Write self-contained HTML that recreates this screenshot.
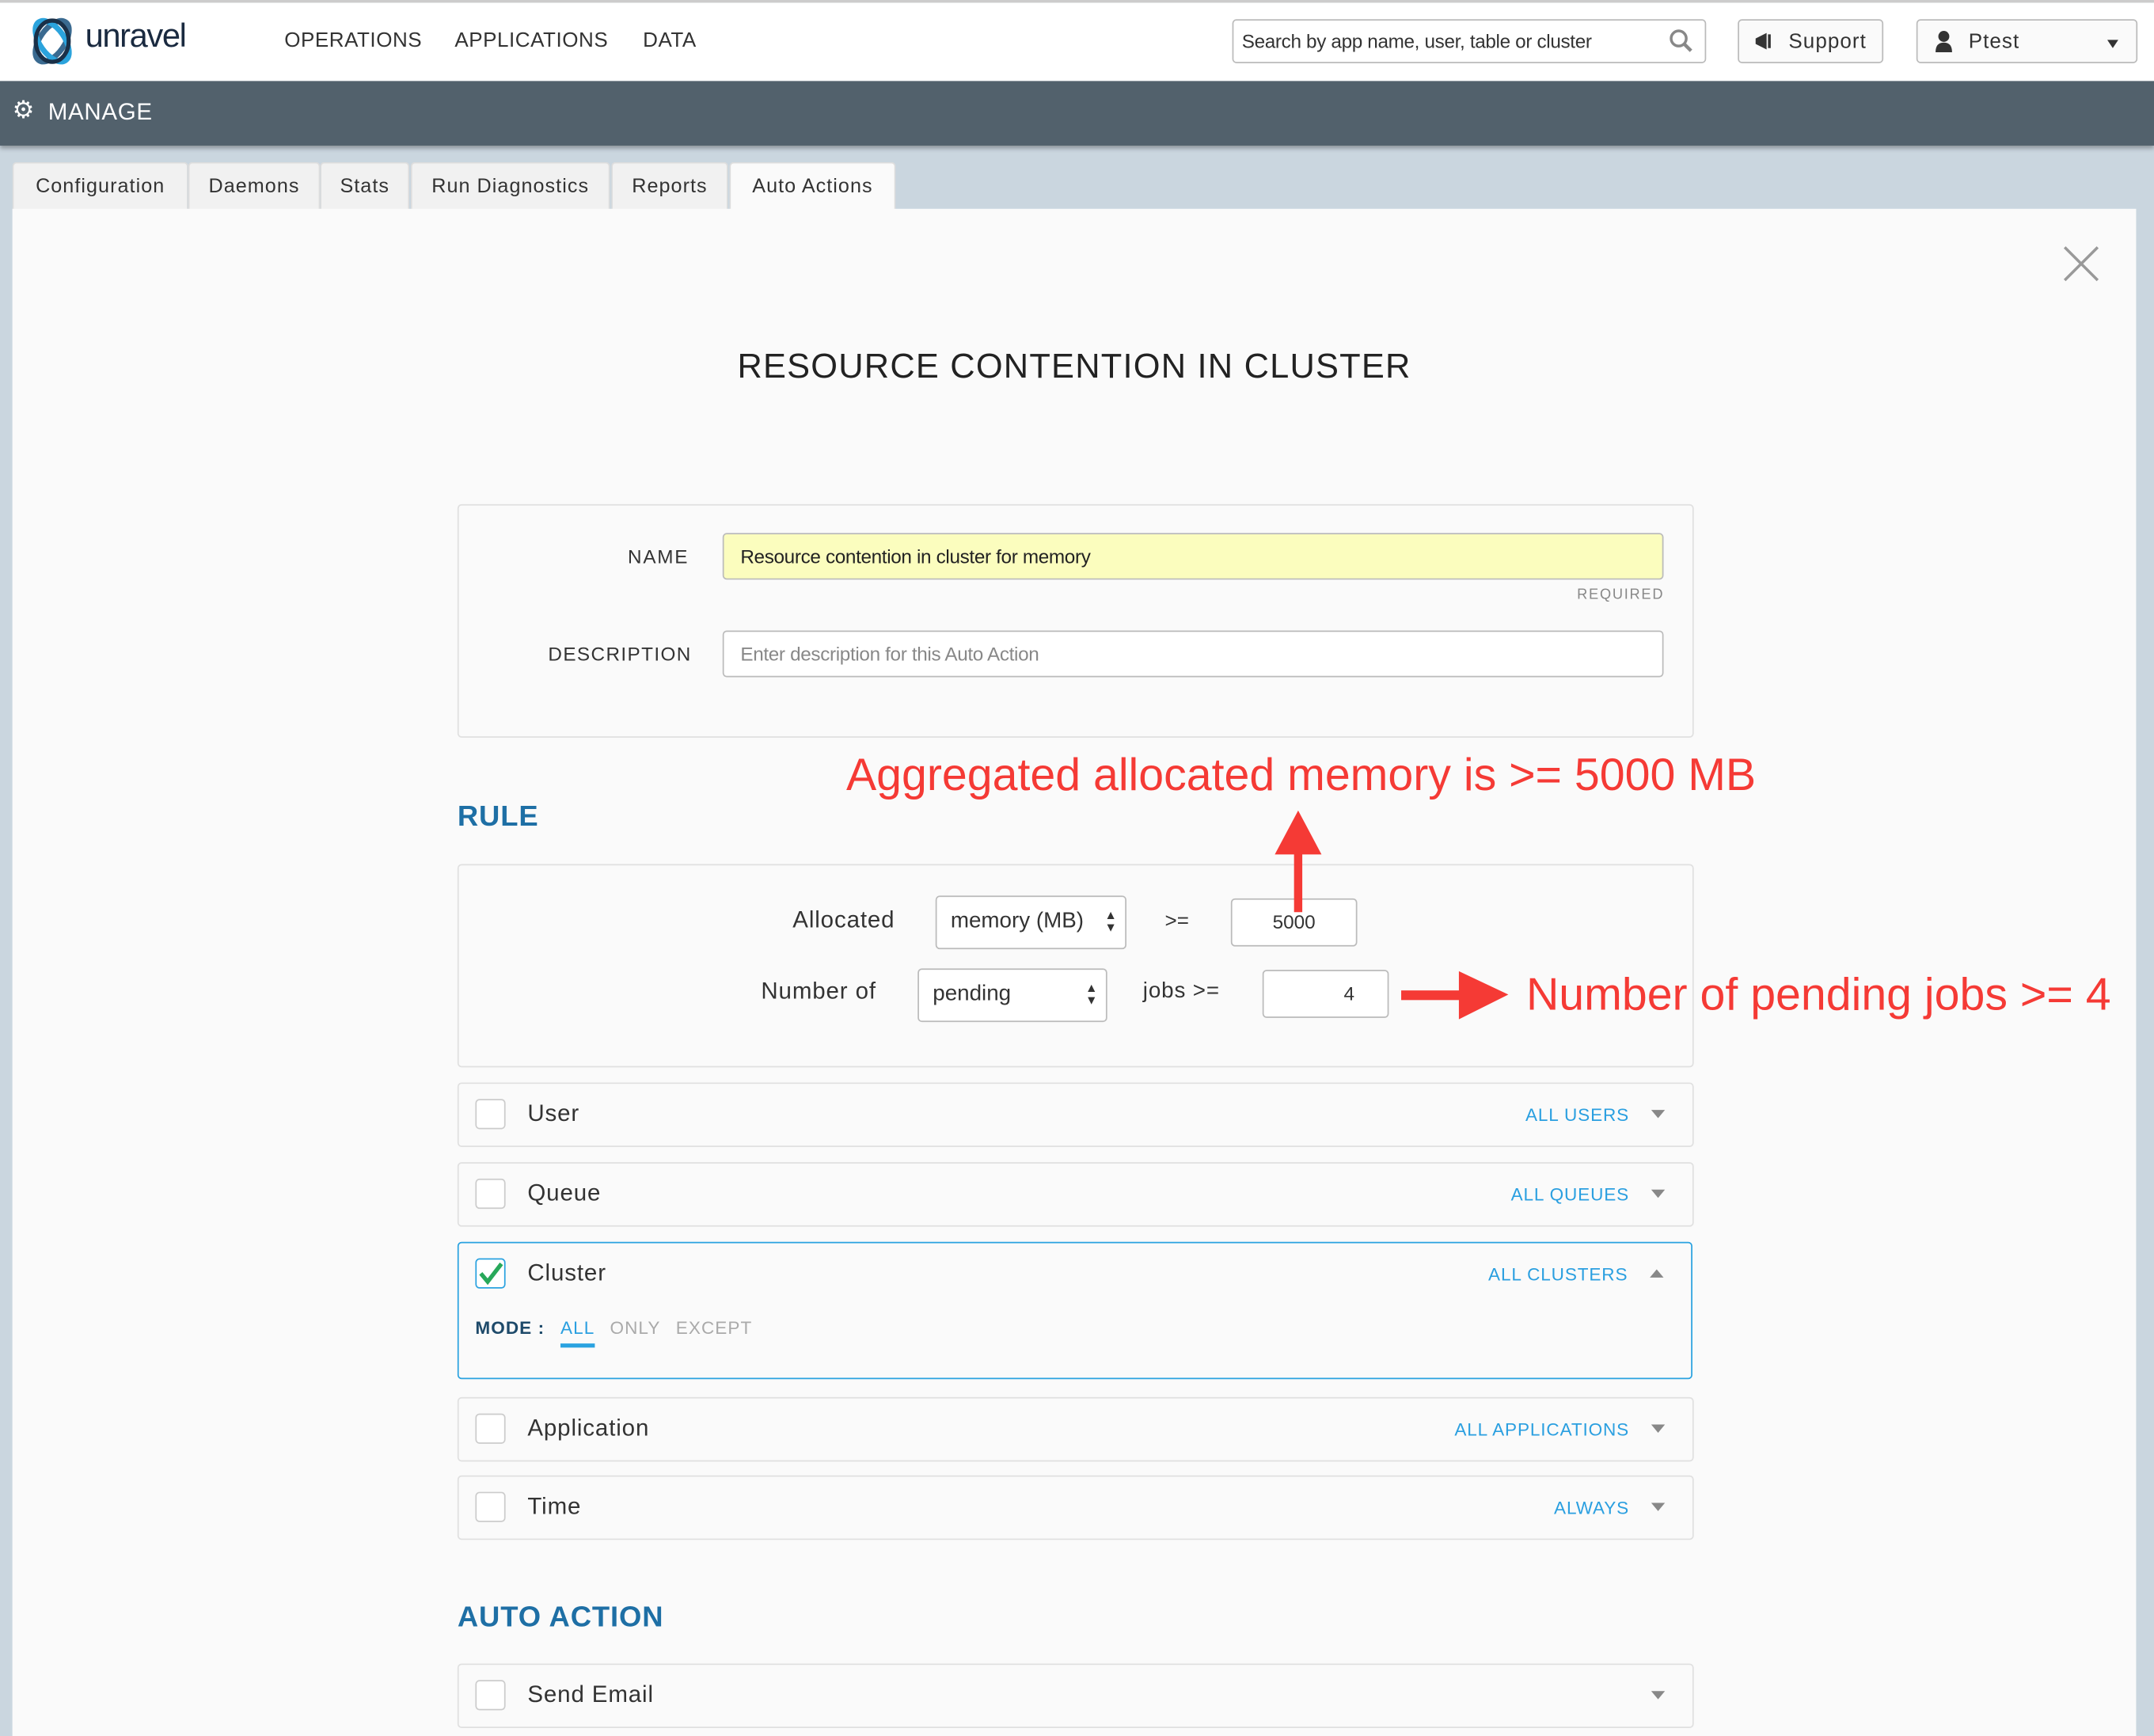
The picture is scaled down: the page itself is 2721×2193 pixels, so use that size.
<!DOCTYPE html>
<html><head><meta charset="utf-8"><style>
html,body{margin:0;padding:0;width:2721px;height:2193px;overflow:hidden;background:#cad6df}
#w{position:absolute;left:0;top:0;width:1568px;height:1264px;transform:scale(1.73533);transform-origin:0 0;font-family:"Liberation Sans",sans-serif;color:#333;background:#cad6df}
.a{position:absolute}
.box{position:absolute;border:1px solid #e0e0e0;border-radius:3px;background:#fafafa}
.inp{position:absolute;border:1px solid #bbb;border-radius:3px;background:#fff;font-size:14px;box-sizing:border-box}
.cb{position:absolute;left:12px;width:22px;height:22px;border:1px solid #ccc;border-radius:3px;background:#fff;box-sizing:border-box}
.lbl{position:absolute;left:50px;font-size:17px;letter-spacing:.5px;color:#333}
.rt{position:absolute;right:46px;font-size:13px;letter-spacing:.5px;color:#2a9fe0}
.car{position:absolute;right:20px;width:0;height:0;border-left:5px solid transparent;border-right:5px solid transparent;border-top:6px solid #888}
.tab{position:absolute;top:118px;height:34px;background:#f1f1f1;border:1px solid #ddd;border-bottom:none;border-radius:3px 3px 0 0;font-size:14.5px;letter-spacing:.6px;line-height:34px;text-align:center;color:#333}
.red{color:#f53a35;font-size:33px;position:absolute;white-space:nowrap}
</style></head><body><div id="w">
<div class="a" style="left:0;top:0;width:1568px;height:2px;background:#ccc"></div>
<div class="a" style="left:0;top:2px;width:1568px;height:57px;background:#fff"></div>
<svg class="a" style="left:18px;top:10px" width="40" height="40" viewBox="0 0 40 40"><ellipse cx="20" cy="20" rx="9" ry="17" fill="none" stroke="#3a6a90" stroke-width="4" transform="rotate(35 20 20)"/><ellipse cx="20" cy="20" rx="9" ry="17" fill="none" stroke="#2ba3dc" stroke-width="4" transform="rotate(-35 20 20)"/><ellipse cx="20" cy="20" rx="12" ry="15" fill="none" stroke="#1a3048" stroke-width="3"/></svg>
<div class="a" style="left:62px;top:13px;font-size:24px;color:#1a2a40;letter-spacing:-.8px">unravel</div>
<div class="a" style="left:207px;top:21px;font-size:15px;letter-spacing:.3px;color:#333">OPERATIONS</div>
<div class="a" style="left:331px;top:21px;font-size:15px;letter-spacing:.3px;color:#333">APPLICATIONS</div>
<div class="a" style="left:468px;top:21px;font-size:15px;letter-spacing:.3px;color:#333">DATA</div>
<div class="inp" style="left:897px;top:14px;width:345px;height:32px;padding:7px 6px;font-size:14px;color:#333;letter-spacing:-.2px">Search by app name, user, table or cluster</div>
<svg class="a" style="left:1215px;top:21px" width="18" height="18"><circle cx="7" cy="7" r="5.5" fill="none" stroke="#888" stroke-width="2"/><line x1="11" y1="11" x2="16" y2="16" stroke="#888" stroke-width="2.5"/></svg>
<div class="inp" style="left:1265px;top:14px;width:106px;height:32px;background:#fafafa;padding:7px 0 0 36px;font-size:15px;letter-spacing:.6px">Support</div>
<svg class="a" style="left:1276px;top:23px" width="18" height="14"><polygon points="2,5 10,1 10,13 2,9" fill="#333"/><rect x="11" y="2" width="2" height="10" fill="#333"/></svg>
<div class="inp" style="left:1395px;top:14px;width:161px;height:32px;background:#fafafa;padding:7px 0 0 37px;font-size:15px;letter-spacing:.6px">Ptest</div>
<svg class="a" style="left:1408px;top:22px" width="14" height="16"><circle cx="7" cy="4.5" r="4" fill="#333"/><path d="M1 16 Q1 9 7 9 Q13 9 13 16Z" fill="#333"/></svg>
<div class="a" style="left:1534px;top:29px;border-left:4.5px solid transparent;border-right:4.5px solid transparent;border-top:6px solid #333"></div>
<div class="a" style="left:0;top:59px;width:1568px;height:47px;background:#52616c;box-shadow:0 2px 3px rgba(0,0,0,.3)"></div>
<div class="a" style="left:9px;top:70px;font-size:18px;color:#fff">⚙</div>
<div class="a" style="left:35px;top:72px;font-size:17px;color:#fff;letter-spacing:.4px">MANAGE</div>
<div class="tab" style="left:9px;width:126px">Configuration</div>
<div class="tab" style="left:137px;width:94px">Daemons</div>
<div class="tab" style="left:233px;width:63px">Stats</div>
<div class="tab" style="left:299px;width:143px">Run Diagnostics</div>
<div class="tab" style="left:445px;width:83px">Reports</div>
<div class="tab" style="left:531px;width:119px;background:#fafafa;height:36px">Auto Actions</div>
<div class="a" style="left:9px;top:152px;width:1546px;height:1112px;background:#fafafa"></div>
<svg class="a" style="left:1502px;top:179px" width="26" height="26"><path d="M1 1L25 25M25 1L1 25" stroke="#999" stroke-width="2"/></svg>
<div class="a" style="left:0;width:1564px;top:253px;text-align:center;font-size:25px;letter-spacing:.7px;color:#222">RESOURCE CONTENTION IN CLUSTER</div>
<div class="box" style="left:333px;top:367px;width:898px;height:168px"></div>
<div class="a" style="left:457px;top:397px;font-size:14px;letter-spacing:1px">NAME</div>
<div class="inp" style="left:526px;top:388px;width:685px;height:34px;background:#fbfdbe;padding:8px 12px;color:#222;letter-spacing:-.2px">Resource contention in cluster for memory</div>
<div class="a" style="left:1148px;top:427px;font-size:10.5px;letter-spacing:1px;color:#888">REQUIRED</div>
<div class="a" style="left:399px;top:468px;font-size:14px;letter-spacing:.8px">DESCRIPTION</div>
<div class="inp" style="left:526px;top:459px;width:685px;height:34px;padding:8px 12px;color:#888;letter-spacing:-.2px">Enter description for this Auto Action</div>
<div class="red" style="left:616px;top:545px">Aggregated allocated memory is &gt;= 5000 MB</div>
<div class="a" style="left:333px;top:583px;font-size:21px;font-weight:bold;color:#1e6fa5;letter-spacing:.5px">RULE</div>
<div class="box" style="left:333px;top:629px;width:898px;height:146px"></div>
<div class="a" style="left:577px;top:660px;font-size:17px;letter-spacing:.5px">Allocated</div>
<div class="inp" style="left:681px;top:652px;width:139px;height:39px;padding:9px 10px;font-size:16px">memory (MB)<span style="position:absolute;right:6px;top:9px;font-size:9px;line-height:9px">▲<br>▼</span></div>
<div class="a" style="left:848px;top:662px;font-size:15px">&gt;=</div>
<div class="inp" style="left:896px;top:654px;width:92px;height:35px;padding:8px 0;text-align:center">5000</div>
<div class="a" style="left:554px;top:712px;font-size:17px;letter-spacing:.5px">Number of</div>
<div class="inp" style="left:668px;top:705px;width:138px;height:39px;padding:9px 10px;font-size:16px">pending<span style="position:absolute;right:6px;top:9px;font-size:9px;line-height:9px">▲<br>▼</span></div>
<div class="a" style="left:832px;top:713px;font-size:16px;letter-spacing:.5px">jobs &gt;=</div>
<div class="inp" style="left:919px;top:706px;width:92px;height:35px;padding:8px 24px 0 0;text-align:right">4</div>
<svg class="a" style="left:920px;top:588px" width="190" height="160"><rect x="22" y="30" width="6" height="46" fill="#f53a35"/><polygon points="8,34 25,2 42,34" fill="#f53a35"/><rect x="100" y="133" width="45" height="7" fill="#f53a35"/><polygon points="142,119 178,136 142,154" fill="#f53a35"/></svg>
<div class="red" style="left:1111px;top:705px">Number of pending jobs &gt;= 4</div>
<div class="box" style="left:333px;top:788px;width:898px;height:45px"><div class="cb" style="top:11px"></div><div class="lbl" style="top:12px">User</div><div class="rt" style="top:15px">ALL USERS</div><div class="car" style="top:19px"></div></div>
<div class="box" style="left:333px;top:846px;width:898px;height:45px"><div class="cb" style="top:11px"></div><div class="lbl" style="top:12px">Queue</div><div class="rt" style="top:15px">ALL QUEUES</div><div class="car" style="top:19px"></div></div>
<div class="box" style="left:333px;top:904px;width:897px;height:98px;border-color:#2aa2e0"><div class="cb" style="top:11px;border-color:#2aa2e0"><svg width="20" height="20" style="position:absolute;left:0;top:0"><path d="M3 10L8 16L18 3" fill="none" stroke="#27a85a" stroke-width="3"/></svg></div><div class="lbl" style="top:12px">Cluster</div><div class="rt" style="top:15px">ALL CLUSTERS</div><div class="car" style="top:19px;border-top:none;border-bottom:6px solid #888"></div>
<div class="a" style="left:12px;top:54px;font-size:13px;letter-spacing:.6px;font-weight:bold;color:#1e4a6a">MODE :</div>
<div class="a" style="left:74px;top:54px;font-size:13px;letter-spacing:.6px;color:#2a9fe0">ALL</div>
<div class="a" style="left:74px;top:73px;width:25px;height:3px;background:#2aa2e0"></div>
<div class="a" style="left:110px;top:54px;font-size:13px;letter-spacing:.6px;color:#aaa">ONLY</div>
<div class="a" style="left:158px;top:54px;font-size:13px;letter-spacing:.6px;color:#aaa">EXCEPT</div></div>
<div class="box" style="left:333px;top:1017px;width:898px;height:45px"><div class="cb" style="top:11px"></div><div class="lbl" style="top:12px">Application</div><div class="rt" style="top:15px">ALL APPLICATIONS</div><div class="car" style="top:19px"></div></div>
<div class="box" style="left:333px;top:1074px;width:898px;height:45px"><div class="cb" style="top:11px"></div><div class="lbl" style="top:12px">Time</div><div class="rt" style="top:15px">ALWAYS</div><div class="car" style="top:19px"></div></div>
<div class="a" style="left:333px;top:1166px;font-size:21px;font-weight:bold;color:#1e6fa5;letter-spacing:.5px">AUTO ACTION</div>
<div class="box" style="left:333px;top:1211px;width:898px;height:45px"><div class="cb" style="top:11px"></div><div class="lbl" style="top:12px">Send Email</div><div class="car" style="top:19px"></div></div>
</div></body></html>
